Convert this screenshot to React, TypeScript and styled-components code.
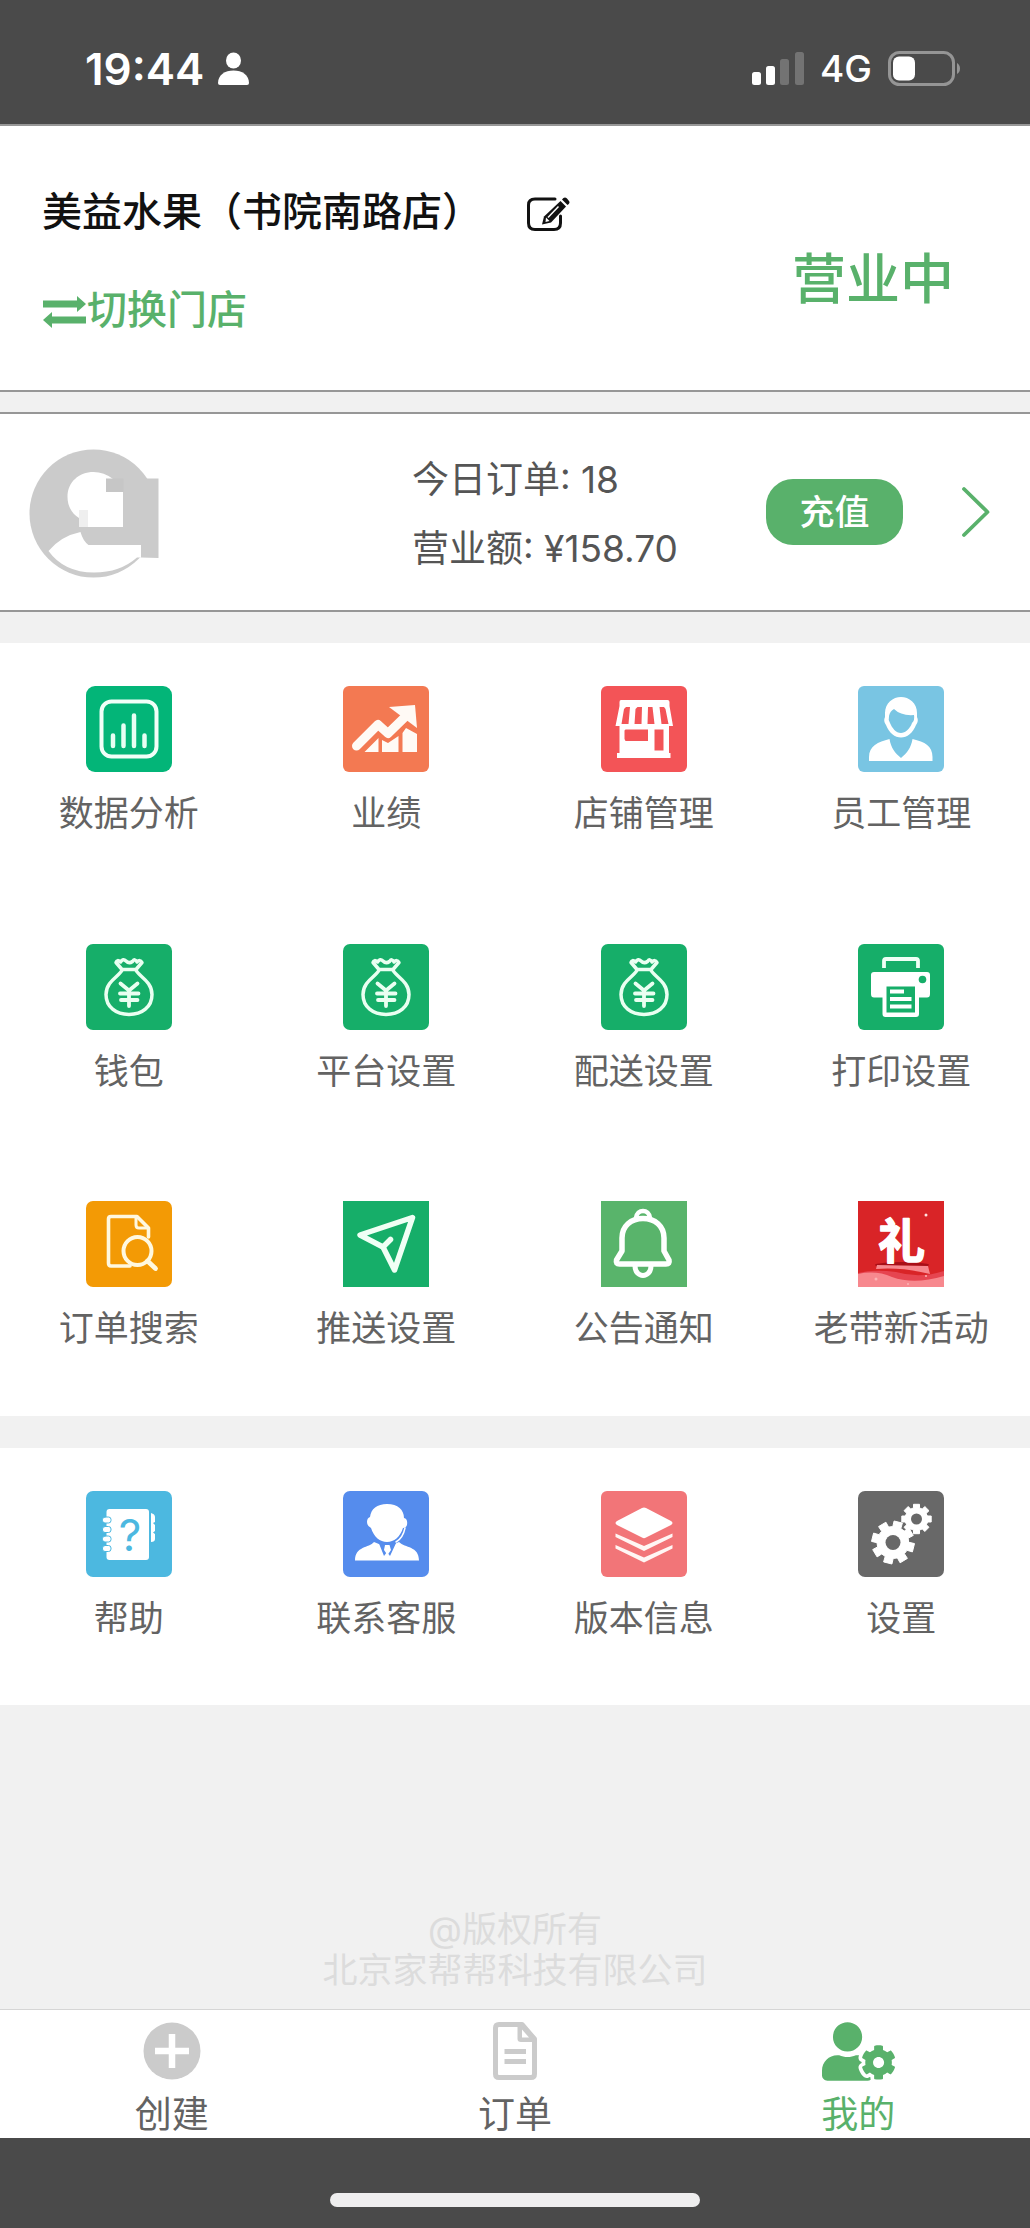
import React from 'react';
import styled, { createGlobalStyle } from 'styled-components';
import { FaUserCog } from 'react-icons/fa';

const green = '#59b16b';
const line = '#979797';

const GlobalStyle = createGlobalStyle`
  *, *::before, *::after { box-sizing: border-box; }
  body {
    margin: 0;
    background: #f1f1f1;
    font-family: Inter, "Noto Sans CJK SC", sans-serif;
    color: #555;
  }
  button { font: inherit; border: 0; padding: 0; background: none; cursor: pointer; }
  a { color: inherit; text-decoration: none; }
  svg { display: block; flex: none; }
`;

const Page = styled.div`
  min-height: 100vh;
  display: flex;
  flex-direction: column;
`;

/* Status bar */
const StatusBar = styled.div`
  height: 126px;
  padding: 14px 69px 0 85px;
  display: flex;
  align-items: center;
  justify-content: space-between;
  background: #4a4a4a;
  border-bottom: 2px solid ${line};
  color: #fff;
`;
const StatusGroup = styled.div<{ $gap: number }>`
  display: flex;
  align-items: center;
  gap: ${(p) => p.$gap}px;
`;
const Clock = styled.time`
  font-size: 44px;
  line-height: 56px;
  font-weight: 600;
`;
const Network = styled.span`
  font-size: 37px;
  line-height: 48px;
  font-weight: 500;
`;

/* Shop header */
const ShopHeader = styled.header`
  display: flex;
  align-items: center;
  justify-content: space-between;
  padding: 56px 76px 50px 42px;
  background: #fff;
  border-bottom: 2px solid ${line};
`;
const ShopInfo = styled.div`
  display: flex;
  flex-direction: column;
  align-items: flex-start;
  gap: 38px;
`;
const TitleRow = styled.div`
  display: flex;
  align-items: center;
  gap: 45px;
`;
const ShopName = styled.h1`
  margin: 0;
  font-size: 40px;
  line-height: 60px;
  font-weight: 500;
  color: #111;
`;
const IconButton = styled.button`
  padding-top: 4px;
  color: #111;
`;
const SwitchShop = styled.button`
  display: flex;
  align-items: center;
  font-size: 40px;
  line-height: 60px;
  font-weight: 500;
  color: ${green};
`;
const OpenState = styled.strong`
  padding-top: 38px;
  font-size: 54px;
  line-height: 80px;
  font-weight: 500;
  color: ${green};
`;

/* Account summary */
const Summary = styled.section`
  display: grid;
  grid-template-columns: 40% 1fr auto auto;
  align-items: center;
  margin-top: 20px;
  padding: 27px 0;
  background: #fff;
  border-top: 2px solid ${line};
  border-bottom: 2px solid ${line};
`;
const AvatarCell = styled.div`
  padding: 4px 0 0 29px;
`;
const Figures = styled.div`
  padding-top: 4px;
  font-size: 37px;
  line-height: 69px;
  color: #555;
  white-space: nowrap;
`;
const Figure = styled.p`
  margin: 0;
`;
const TopUp = styled.button`
  width: 137px;
  height: 66px;
  margin-right: 58px;
  border-radius: 27px;
  background: ${green};
  color: #fff;
  font-size: 35px;
  line-height: 64px;
  font-weight: 500;
`;
const More = styled.a`
  padding-right: 39px;
  color: ${green};
`;

/* Menu grids */
const Menu = styled.nav<{ $top: number }>`
  display: grid;
  grid-template-columns: repeat(4, 1fr);
  margin-top: ${(p) => p.$top}px;
  background: #fff;
`;
const MenuItem = styled.a`
  aspect-ratio: 1;
  display: flex;
  flex-direction: column;
  align-items: center;
  padding-top: 43px;
  gap: 17px;
  font-size: 35px;
  line-height: 48px;
  color: #636363;
  white-space: nowrap;
`;
const Tile = styled.span<{ $bg: string; $radius: number }>`
  width: 86px;
  height: 86px;
  overflow: hidden;
  border-radius: ${(p) => p.$radius}px;
  background: ${(p) => p.$bg};
`;

/* Footer */
const Copyright = styled.footer`
  margin-top: auto;
  padding: 40px 0 18px;
  text-align: center;
  font-size: 35px;
  line-height: 41px;
  font-weight: 400;
  color: #dcdcdc;
`;
const TabBar = styled.nav`
  display: grid;
  grid-template-columns: repeat(3, 1fr);
  padding-top: 12px;
  background: #fff;
  border-top: 1px solid #d6d6d6;
`;
const Tab = styled.a<{ $active?: boolean }>`
  display: flex;
  flex-direction: column;
  align-items: center;
  gap: 12px;
  font-size: 37px;
  line-height: 46px;
  color: ${(p) => (p.$active ? green : '#636363')};
`;
const TabIcon = styled.span<{ $active?: boolean }>`
  height: 58px;
  display: flex;
  align-items: center;
  color: ${(p) => (p.$active ? green : '#cbcbcb')};
`;
const HomeArea = styled.div`
  height: 90px;
  padding-top: 55px;
  background: #4a4a4a;
`;
const HomeIndicator = styled.div`
  width: 36%;
  height: 14px;
  margin: 0 auto;
  border-radius: 7px;
  background: #efeeef;
`;

/* Drawings */
const Art = ({ children }: { children: React.ReactNode }) => (
  <svg width="86" height="86" viewBox="0 0 86 86" fill="none" strokeLinecap="round" strokeLinejoin="round" aria-hidden="true">
    {children}
  </svg>
);

const BarsArt = () => (
  <Art>
    <rect x="15.500" y="15.500" width="55" height="55" rx="10" stroke="#f0fff8" strokeWidth="4" />
    <path d="M27 49.500V60M37.500 39.500V60M48 29.500V60M58.500 49.500V60" stroke="#e6fff3" strokeWidth="4.500" />
  </Art>
);
const TrendArt = () => (
  <Art>
    <path d="M13.500 60L35 38.500L45 47.500L64 29" stroke="#fffaf5" strokeWidth="9" />
    <path d="M46 21L72 19L74 42Z" fill="#fffaf5" />
    <path d="M21.500 66L35.500 52V66ZM39 54L45 57L55.500 50V66H39ZM59.500 47L63 42L74 48V66H59.500Z" fill="#fffaf5" />
  </Art>
);
const StoreArt = () => (
  <Art>
    <path d="M20 14H66.500Q68.500 14 68.500 16V20L72 40H68V67H69.500V72H16V67H18.500V40H14.500L18.500 20V16Q18.500 14 20 14Z" fill="#fff" />
    <path d="M25 21H29L27.500 38H20.500L23 23ZM36.500 21H41L40.500 38H33.500L34.500 23ZM47 21H51.500L53.500 38H46.500ZM58.500 21H63L64.500 23L67.500 38H60.500Z" fill="#f35457" />
    <path d="M24.500 43.500H47V55H24.500L23.500 53V44.500ZM53.500 43.500H62.500V64.500H53.500Z" fill="#f35457" />
  </Art>
);
const StaffArt = () => (
  <Art>
    <path d="M43 11C51 11 59 17 59 27V31Q61 35 58 39C55 47 49 51.500 43 51.500C37 51.500 31 47 28 39Q25 35 27 31V27C27 17 35 11 43 11Z" fill="#fff" />
    <path d="M36 23Q43 30 56 29Q57 34 54 37C52 43 47 47 43 47C38 47 34 42 32 37Q30 34 31 30Q32 25 36 23Z" fill="#79c5e3" />
    <path d="M31.500 53C33 62 37 67 43 72C49 67 53 62 54.500 53C67 56 74.500 60 74.500 71V75H11V71C11 60 20 56 31.500 53Z" fill="#fff" />
  </Art>
);
const BagArt = () => (
  <Art>
    <path d="M36 26C34 32 20 37 20 50.500C20 63 30 70.500 43 70.500C56 70.500 66 63 66 50.500C66 37 52 32 50 26" stroke="#e9fff1" strokeWidth="3.500" />
    <path d="M36 25.500H50L56 18.500Q54 15 51 18Q49 14 46.500 17.500Q43 20 40 17Q37 14 34.500 18Q31 15 30 18.500Z" stroke="#e9fff1" strokeWidth="3.500" />
    <path d="M34.500 39.500L43 46.500L51.500 39.500M43 46.500V62M34 49.500H52.500M35 56H51.500" stroke="#e9fff1" strokeWidth="3.800" />
  </Art>
);
const PrinterArt = () => (
  <Art>
    <path d="M26 24V17Q26 15 28 15H58Q60 15 60 17V24" stroke="#effff5" strokeWidth="3.800" strokeLinecap="butt" />
    <path d="M16 28H69Q72 28 72 31V50Q72 53.500 69 53.500H61V70Q61 73 58 73H27.500Q24.500 73 24.500 70V53.500H16Q13 53.500 13 50V31Q13 28 16 28Z" fill="#fff" />
    <path d="M28.500 42.500H57V68.500H28.500Z" fill="#16ae69" />
    <circle cx="64.500" cy="35.500" r="3.800" fill="#16ae69" />
    <path d="M32 47.500H46M32 55H53.500M32 62.500H53.500" stroke="#fff" strokeWidth="3.800" strokeLinecap="butt" />
  </Art>
);
const SearchArt = () => (
  <Art>
    <path d="M44 65H25Q22.500 65 22.500 62V18Q22.500 15.500 25 15.500H51L62.500 27V36" stroke="#fff8df" strokeWidth="3.600" />
    <path d="M50 16V24Q50 27 53 27H62" stroke="#fff8df" strokeWidth="3" />
    <circle cx="51.500" cy="50" r="14" stroke="#fff8df" strokeWidth="4" />
    <path d="M61.500 60L69.500 67.500" stroke="#fff8df" strokeWidth="4.800" />
  </Art>
);
const PushArt = () => (
  <Art>
    <path d="M69.500 16.500L17 34L40 46L51.500 69Z" stroke="#f0fff5" strokeWidth="5.500" />
    <path d="M40 46L47.500 38.500" stroke="#f0fff5" strokeWidth="5.500" />
  </Art>
);
const BellArt = () => (
  <Art>
    <path d="M21 50V37C21 25 30 17.500 42 17.500C54 17.500 63 25 63 37V50L68 59Q69 63 65 63H18.500Q14.500 63 15.500 59Z" stroke="#fff" strokeWidth="5.500" />
    <path d="M35 17C36 7.500 48 7.500 49 17" stroke="#fff" strokeWidth="4.500" />
    <path d="M34 65C34 77.500 50 77.500 50 65" stroke="#fff" strokeWidth="5" />
  </Art>
);
const GiftArt = () => (
  <Art>
    <ellipse cx="44" cy="64" rx="27" ry="3" fill="#a90f17" />
    <path d="M0 72Q16 68 38 71Q62 78 86 70V86H0Z" fill="#e64550" />
    <path d="M19 64L70 65L72 73Q44 66 18 68Z" fill="#f7888e" />
    <path d="M0 73Q18 69 34 76Q56 84 86 75V86H0Z" fill="#f7888e" />
    <circle cx="68" cy="14" r="1.500" fill="#ffe3e0" />
    <circle cx="18" cy="78" r="1.500" fill="#fbb5b5" />
    <circle cx="68" cy="75" r="1" fill="#fbb5b5" />
    <circle cx="50" cy="83" r="1" fill="#fbb5b5" />
    <text x="43.500" y="57" textAnchor="middle" fontSize="47" fontWeight="700" fill="#fff" stroke="#fff" strokeWidth="1.500">礼</text>
  </Art>
);
const HelpArt = () => (
  <Art>
    <rect x="20.500" y="18" width="42.500" height="51" rx="3" fill="#fff" />
    <path d="M65 22Q69 23 69 26V31L67 32L69 34V40L67 41.500L69 43V48Q69 51 65 51Z" fill="#fff" />
    {[29, 38.5, 48, 57.5].map((y) => (
      <rect key={y} x="16.500" y={y - 3} width="8.500" height="6" rx="2.500" fill="#fff" stroke="#4cb8e0" strokeWidth="1" />
    ))}
    <text x="44" y="60" textAnchor="middle" fontSize="44" fill="#4cb8e0">?</text>
  </Art>
);
const ServiceArt = () => (
  <Art>
    <path d="M31 51C26 57 12 55 12 69.500H76C76 55 62 57 56 51Q44 58 31 51Z" fill="#fff" />
    <path d="M35 50L41 65L44 61L47 65L54 50Z" fill="#558ced" />
    <path d="M44 13C55 13 61 19 61 27Q65 28 64 34Q63 37 60 37C57 46 51 51 44 51C37 51 31 46 28 37Q24 35 24 31Q24 27 27 26C28 18 34 13 44 13Z" fill="#fff" />
    <path d="M62 37Q60 47 53 51" stroke="#fff" strokeWidth="1.500" />
    <path d="M42 54H46.500L48 59L44.500 64L41 59Z" fill="#fff" />
  </Art>
);
const LayersArt = () => (
  <Art>
    <path d="M41 17Q43 16 45 17L70 30Q73 32 70 34L45 46.500Q43 48 41 46.500L16 34Q13 32 16 30Z" fill="#fff" />
    <path d="M14.500 42.500L43 55L71.500 42.500V46L43 60L14.500 46ZM14.500 54L43 66.500L71.500 54V57.500L43 71.500L14.500 57.500Z" fill="#fff6f4" />
  </Art>
);

const gearPath = (cx: number, cy: number, outer: number, inner: number, turn: number) => {
  const points: string[] = [];
  for (let i = 0; i < 8; i += 1) {
    const base = (i * Math.PI) / 4 + turn;
    [[-0.26, inner], [-0.2, outer], [0.2, outer], [0.26, inner]].forEach(([a, r]) => {
      points.push(`${(cx + Math.cos(base + a) * r).toFixed(1)} ${(cy + Math.sin(base + a) * r).toFixed(1)}`);
    });
  }
  return `M${points.join('L')}Z`;
};
const GearsArt = () => (
  <Art>
    <path d={gearPath(35, 51.5, 21.5, 16, 0.25)} fill="#fff" stroke="#fff" />
    <circle cx="35" cy="51.500" r="7.500" fill="#686868" />
    <path d={gearPath(58.5, 28, 15, 11.5, 0)} fill="#fff" stroke="#fff" />
    <circle cx="58.500" cy="28" r="5.500" fill="#686868" />
  </Art>
);

const PersonGlyph = () => (
  <svg width="31" height="34" viewBox="0 0 31 34" fill="#fff" aria-hidden="true">
    <ellipse cx="15.500" cy="8.500" rx="7.500" ry="8" />
    <path d="M0 31C0 23 7 18.500 15.500 18.500S31 23 31 31Q31 33 29 33H2Q0 33 0 31Z" />
  </svg>
);
const SignalGlyph = () => (
  <svg width="52" height="34" viewBox="0 0 52 34" fill="#fff" aria-label="信号">
    <rect x="0" y="20" width="9" height="13" rx="2.500" />
    <rect x="14" y="14" width="9" height="19" rx="2.500" />
    <rect x="28" y="7" width="9" height="26" rx="2.500" fill="#737373" />
    <rect x="43" y="0" width="9" height="33" rx="2.500" fill="#737373" />
  </svg>
);
const BatteryGlyph = () => (
  <svg width="73" height="36" viewBox="0 0 73 36" fill="none" aria-label="电池">
    <rect x="1.500" y="1.500" width="64" height="32" rx="10" stroke="#959595" strokeWidth="3" />
    <rect x="5" y="5.500" width="22" height="24" rx="6" fill="#fff" />
    <path d="M69 12Q72 14 72 17.500T69 23Z" fill="#959595" />
  </svg>
);
const EditGlyph = () => (
  <svg width="44" height="36" viewBox="0 0 44 36" fill="none" aria-hidden="true">
    <path d="M28 3H8Q1.500 3 1.500 9V27Q1.500 33.500 8 33.500H27Q33.500 33.500 33.500 27V20" stroke="#111" strokeWidth="3" strokeLinecap="round" />
    <path d="M33.500 5L39 10.500L24 26.500L15 28.500L17 20.500Z" fill="#111" />
    <path d="M35 3.500Q37.500 0 40 2.500L42 5Q43.500 7 40.500 9Z" fill="#111" />
    <path d="M31.500 10.500L21 21.500" stroke="#fff" strokeWidth="1.500" />
    <path d="M19 21.500L22.500 25L18.500 26Z" fill="#fff" />
  </svg>
);
const SwapGlyph = () => (
  <svg width="45" height="36" viewBox="0 0 45 36" fill="currentColor" aria-hidden="true">
    <path d="M1 8.500H35V4L44 12L35 20V15.500H1ZM44 24.500H10V20L1 28L10 36V31.500H44Z" />
  </svg>
);
const ChevronGlyph = () => (
  <svg width="30" height="52" viewBox="0 0 30 52" fill="none" aria-hidden="true">
    <path d="M3 3L26.500 26L3 49" stroke="currentColor" strokeWidth="3.800" strokeLinecap="round" strokeLinejoin="round" />
  </svg>
);
const AvatarArt = () => (
  <svg width="130" height="130" viewBox="0 0 130 130" role="img" aria-label="头像">
    <circle cx="64.500" cy="64.500" r="64" fill="#cbcbcb" />
    <path d="M94 29.500H129.500V109L112 108.500L94 100Z" fill="#cbcbcb" />
    <path d="M50 78V69C43 65 38.500 57 38.500 48C38.500 33 50 23 64.500 23Q75 23 84 30V43H94V78Z" fill="#fff" />
    <rect x="77" y="29.500" width="17.500" height="13.500" fill="#c6c6c6" />
    <rect x="50" y="61" width="9" height="17" fill="#efefef" />
    <path d="M19.500 102Q32 87 51.500 83Q54 92 59.500 96H112V108.500H108Q91 123.500 65 123.500Q35 123.500 19.500 102Z" fill="#fff" />
  </svg>
);
const CreateGlyph = () => (
  <svg width="58" height="58" viewBox="0 0 58 58" fill="none" aria-hidden="true">
    <circle cx="29" cy="29" r="28.500" fill="currentColor" />
    <path d="M29 12V46M12 29H46" stroke="#fff" strokeWidth="6.500" />
  </svg>
);
const DocGlyph = () => (
  <svg width="44" height="58" viewBox="0 0 44 58" fill="none" aria-hidden="true">
    <path d="M6 2.500H29L41.500 17V52Q41.500 55.500 38 55.500H6Q2.500 55.500 2.500 52V6Q2.500 2.500 6 2.500Z" stroke="currentColor" strokeWidth="5" strokeLinejoin="round" />
    <path d="M24.500 3H29L41 17V20H28Q24.500 20 24.500 17Z" fill="currentColor" />
    <path d="M29 7.500V15.500H36Z" fill="#fff" />
    <path d="M11.500 29.500H33M11.500 39.500H33" stroke="currentColor" strokeWidth="5" />
  </svg>
);

type Entry = { label: string; bg: string; radius: number; art: React.ReactNode };

const mainEntries: Entry[] = [
  { label: '数据分析', bg: '#03b578', radius: 9, art: <BarsArt /> },
  { label: '业绩', bg: '#f37952', radius: 6, art: <TrendArt /> },
  { label: '店铺管理', bg: '#f35457', radius: 6, art: <StoreArt /> },
  { label: '员工管理', bg: '#79c5e3', radius: 6, art: <StaffArt /> },
  { label: '钱包', bg: '#16ae69', radius: 7, art: <BagArt /> },
  { label: '平台设置', bg: '#16ae69', radius: 7, art: <BagArt /> },
  { label: '配送设置', bg: '#16ae69', radius: 7, art: <BagArt /> },
  { label: '打印设置', bg: '#16ae69', radius: 6, art: <PrinterArt /> },
  { label: '订单搜索', bg: '#f39a05', radius: 7, art: <SearchArt /> },
  { label: '推送设置', bg: '#16ae69', radius: 0, art: <PushArt /> },
  { label: '公告通知', bg: '#59b46b', radius: 0, art: <BellArt /> },
  { label: '老带新活动', bg: '#d92427', radius: 0, art: <GiftArt /> },
];
const supportEntries: Entry[] = [
  { label: '帮助', bg: '#4cb8e0', radius: 7, art: <HelpArt /> },
  { label: '联系客服', bg: '#558ced', radius: 7, art: <ServiceArt /> },
  { label: '版本信息', bg: '#f27578', radius: 6, art: <LayersArt /> },
  { label: '设置', bg: '#686868', radius: 7, art: <GearsArt /> },
];

const MenuGrid = ({ entries, top, name }: { entries: Entry[]; top: number; name: string }) => (
  <Menu $top={top} aria-label={name}>
    {entries.map((e) => (
      <MenuItem href="#" key={e.label}>
        <Tile $bg={e.bg} $radius={e.radius}>{e.art}</Tile>
        {e.label}
      </MenuItem>
    ))}
  </Menu>
);

export default function App() {
  return (
    <Page>
      <GlobalStyle />
      <StatusBar>
        <StatusGroup $gap={14}>
          <Clock>19:44</Clock>
          <PersonGlyph />
        </StatusGroup>
        <StatusGroup $gap={16}>
          <SignalGlyph />
          <Network>4G</Network>
          <BatteryGlyph />
        </StatusGroup>
      </StatusBar>

      <ShopHeader>
        <ShopInfo>
          <TitleRow>
            <ShopName>美益水果（书院南路店）</ShopName>
            <IconButton type="button" aria-label="编辑"><EditGlyph /></IconButton>
          </TitleRow>
          <SwitchShop type="button"><SwapGlyph />切换门店</SwitchShop>
        </ShopInfo>
        <OpenState>营业中</OpenState>
      </ShopHeader>

      <Summary>
        <AvatarCell><AvatarArt /></AvatarCell>
        <Figures>
          <Figure>今日订单: 18</Figure>
          <Figure>营业额: ¥158.70</Figure>
        </Figures>
        <TopUp type="button">充值</TopUp>
        <More href="#" aria-label="详情"><ChevronGlyph /></More>
      </Summary>

      <MenuGrid entries={mainEntries} top={31} name="功能" />
      <MenuGrid entries={supportEntries} top={32} name="支持" />

      <Copyright>
        @版权所有<br />北京家帮帮科技有限公司
      </Copyright>
      <TabBar aria-label="主导航">
        <Tab href="#">
          <TabIcon><CreateGlyph /></TabIcon>
          创建
        </Tab>
        <Tab href="#">
          <TabIcon><DocGlyph /></TabIcon>
          订单
        </Tab>
        <Tab href="#" $active aria-current="page">
          <TabIcon $active>
            <FaUserCog size={73} />
          </TabIcon>
          我的
        </Tab>
      </TabBar>
      <HomeArea><HomeIndicator /></HomeArea>
    </Page>
  );
}
